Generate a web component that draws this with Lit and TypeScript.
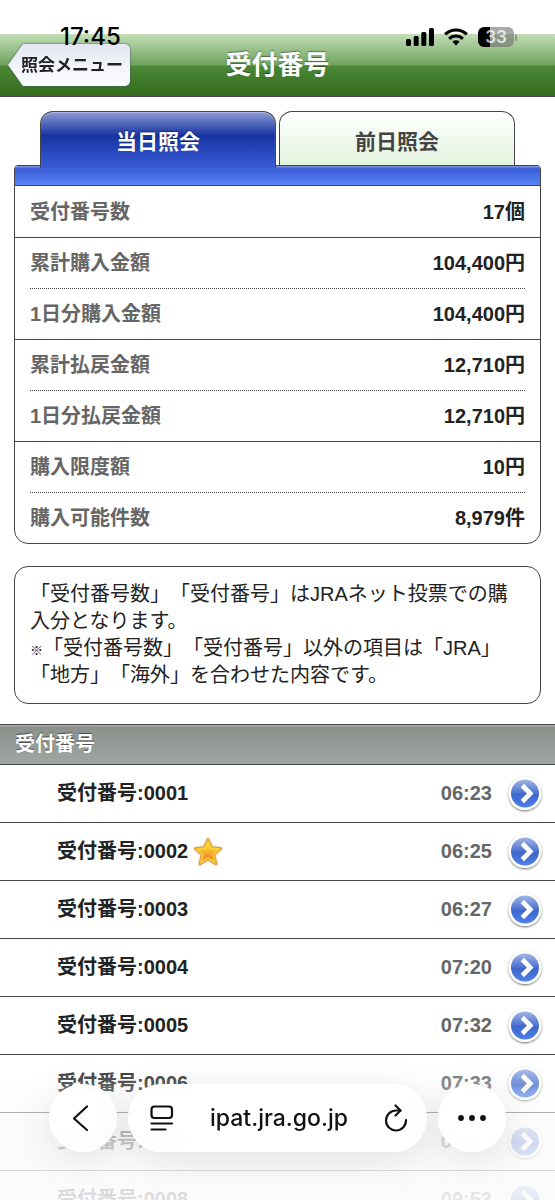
import { LitElement, html, css, svg } from "lit";
import { customElement, property } from "lit/decorators.js";

interface SummaryRow {
  label: string;
  value: string;
}

interface Receipt {
  no: string;
  time: string;
  starred?: boolean;
}

const SUMMARY: SummaryRow[][] = [
  [{ label: "受付番号数", value: "17個" }],
  [
    { label: "累計購入金額", value: "104,400円" },
    { label: "1日分購入金額", value: "104,400円" },
  ],
  [
    { label: "累計払戻金額", value: "12,710円" },
    { label: "1日分払戻金額", value: "12,710円" },
  ],
  [
    { label: "購入限度額", value: "10円" },
    { label: "購入可能件数", value: "8,979件" },
  ],
];

const RECEIPTS: Receipt[] = [
  { no: "0001", time: "06:23" },
  { no: "0002", time: "06:25", starred: true },
  { no: "0003", time: "06:27" },
  { no: "0004", time: "07:20" },
  { no: "0005", time: "07:32" },
  { no: "0006", time: "07:33" },
  { no: "0007", time: "08:57" },
  { no: "0008", time: "09:53" },
];

@customElement("status-bar")
class StatusBar extends LitElement {
  static styles = css`
    :host {
      display: flex;
      align-items: center;
      justify-content: space-between;
      padding: 0 38px 0 60px;
      color: #000;
      font-family: Inter, sans-serif;
    }
    .time {
      font-size: 24px;
      line-height: 24px;
      font-weight: 500;
    }
    .icons {
      display: flex;
      align-items: center;
      gap: 10px;
    }
    .battery {
      display: flex;
      align-items: center;
      gap: 1px;
    }
    .level {
      display: block;
      width: 36px;
      height: 20px;
      border-radius: 6px;
      background: linear-gradient(90deg, #000 33%, rgba(110, 110, 110, 0.6) 33%);
      color: rgba(255, 255, 255, 0.75);
      font-size: 17px;
      line-height: 20px;
      font-weight: 600;
      text-align: center;
    }
    .cap {
      width: 2px;
      height: 7px;
      border-radius: 0 2px 2px 0;
      background: rgba(110, 110, 110, 0.6);
    }
  `;

  render() {
    return html`
      <span class="time">17:45</span>
      <span class="icons">
        <svg width="28" height="18" viewBox="0 0 28 18" aria-label="電波">
          <rect x="0" y="11" width="5" height="7" rx="1.5" />
          <rect x="7.7" y="8" width="5" height="10" rx="1.5" />
          <rect x="15.3" y="4" width="5" height="14" rx="1.5" />
          <rect x="23" y="0" width="5" height="18" rx="1.5" />
        </svg>
        <svg width="24" height="18" viewBox="0 0 24 18" fill="none" stroke="#000" stroke-width="3.2" aria-label="Wi-Fi">
          <path d="M1.2 6.4a15.4 15.4 0 0 1 21.6 0" />
          <path d="M5.2 10.8a9.6 9.6 0 0 1 13.6 0" />
          <path d="M12 17.4l-3.6-3.6a5.1 5.1 0 0 1 7.2 0z" fill="#000" stroke="none" />
        </svg>
        <span class="battery"><span class="level">33</span><span class="cap"></span></span>
      </span>
    `;
  }
}

@customElement("receipt-row")
class ReceiptRow extends LitElement {
  @property({ attribute: false }) receipt!: Receipt;

  static styles = css`
    :host {
      display: block;
    }
    .link {
      display: flex;
      align-items: center;
      box-sizing: border-box;
      min-height: 58px;
      padding: 0 10px 0 57px;
      border-bottom: 1px solid #444;
      color: #222;
      text-decoration: none;
      font-weight: 700;
    }
    .star {
      margin-left: 4px;
    }
    .time {
      margin-left: auto;
      color: #666;
    }
    .go {
      margin-left: 13px;
    }
    svg {
      display: block;
    }
  `;

  private star() {
    const shape = "M16 3.400L19.600 11.600L28.800 12.600L21.900 18.600L24 27.800L16 23L8 27.800L10.100 18.600L3.200 12.600L12.400 11.600Z";
    return svg`
      <svg class="star" width="32" height="32" viewBox="0 0 32 32" stroke-linejoin="round" aria-label="注目">
        <defs>
          <linearGradient id="gold" x1="0" y1="0" x2="0" y2="1">
            <stop offset="0" stop-color="#fde01c" />
            <stop offset="0.4" stop-color="#fdc52c" />
            <stop offset="0.7" stop-color="#f0922c" />
            <stop offset="1" stop-color="#fbb834" />
          </linearGradient>
        </defs>
        <path d=${shape} fill="none" stroke="#f1eadf" stroke-width="5" />
        <path d=${shape} fill="none" stroke="#e2933a" stroke-width="2.600" />
        <path d=${shape} fill="url(#gold)" stroke="#f8b732" stroke-width="0.800" />
        <path d=${shape} fill="none" stroke="#fbdc3c" stroke-width="1.300" transform="translate(2.400 2.600) scale(0.850)" />
      </svg>`;
  }

  render() {
    const { no, time, starred } = this.receipt;
    return html`
      <a class="link" href="#${no}">
        <span>受付番号:${no}</span>
        ${starred ? this.star() : null}
        <span class="time">${time}</span>
        <svg class="go" width="40" height="40" viewBox="0 0 40 40" aria-hidden="true">
          <defs>
            <linearGradient id="ball" x1="0" y1="0" x2="0" y2="1">
              <stop offset="0" stop-color="#a3b6e6" />
              <stop offset="0.5" stop-color="#4a70cf" />
              <stop offset="0.52" stop-color="#3c66cc" />
              <stop offset="1" stop-color="#4f80e8" />
            </linearGradient>
            <filter id="soft" x="-20%" y="-20%" width="140%" height="150%">
              <feDropShadow dx="0" dy="1" stdDeviation="1.300" flood-color="#000" flood-opacity="0.6" />
            </filter>
          </defs>
          <circle cx="20" cy="19.500" r="16.500" fill="#fff" filter="url(#soft)" />
          <circle cx="20" cy="19.500" r="14" fill="url(#ball)" />
          <path d="M17.300 11.500l8 8-8 8" fill="none" stroke="#fff" stroke-width="4.600" />
        </svg>
      </a>
    `;
  }
}

@customElement("browser-bar")
class BrowserBar extends LitElement {
  static styles = css`
    :host {
      display: flex;
      gap: 11px;
      padding: 0 49px;
    }
    .round,
    .address {
      height: 68px;
      border-radius: 34px;
      background: rgba(255, 255, 255, 0.94);
      backdrop-filter: blur(3px);
      box-shadow:
        0 8px 40px rgba(0, 0, 0, 0.1),
        inset 0 0 2px 1px #fff;
    }
    .round {
      flex: none;
      width: 68px;
    }
    .address {
      flex: 1;
      display: flex;
      align-items: center;
      justify-content: space-between;
      padding: 0 19px 0 22px;
    }
    button {
      display: flex;
      align-items: center;
      justify-content: center;
      padding: 0;
      border: 0;
      background: none;
      color: #111;
      font: 500 23px/30px Inter, sans-serif;
    }
  `;

  render() {
    return html`
      <button class="round" aria-label="戻る">
        <svg width="28" height="28" viewBox="0 0 28 28" fill="none" stroke="#111" stroke-width="2.200" stroke-linecap="round" stroke-linejoin="round">
          <path d="M18 2.500L5 14.500 18 26" />
        </svg>
      </button>
      <div class="address">
        <button aria-label="ページメニュー">
          <svg width="24" height="28" viewBox="0 0 24 28" fill="none" stroke="#111" stroke-width="2.200" stroke-linecap="round">
            <rect x="1.500" y="2.500" width="20.500" height="11.500" rx="3" />
            <path d="M1.500 19.500h20.500M1.500 25.500h14" />
          </svg>
        </button>
        <button>ipat.jra.go.jp</button>
        <button aria-label="再読み込み">
          <svg width="24" height="28" viewBox="0 0 24 28" fill="none" stroke="#111" stroke-width="2.200" stroke-linecap="round" stroke-linejoin="round">
            <path d="M16.500 6.500h-4.500a10 10 0 1 0 10 9.500" />
            <path d="M11.500 1.500l5 5-5 5" />
          </svg>
        </button>
      </div>
      <button class="round" aria-label="その他">
        <svg width="28" height="8" viewBox="0 0 28 8" fill="#111">
          <circle cx="3" cy="4" r="2.900" />
          <circle cx="14" cy="4" r="2.900" />
          <circle cx="25" cy="4" r="2.900" />
        </svg>
      </button>
    `;
  }
}

@customElement("app-root")
class AppRoot extends LitElement {
  static styles = css`
    :host {
      display: block;
      position: relative;
      box-sizing: border-box;
      height: 100vh;
      overflow: hidden;
      padding-top: 34px;
      background: #fff;
      color: #222;
      font-family: "Liberation Sans", "Noto Sans CJK JP", sans-serif;
      font-size: 20px;
      line-height: 27px;
      text-spacing-trim: space-all;
    }
    .status {
      position: absolute;
      inset: 25px 0 auto;
    }
    .header {
      display: grid;
      grid-template-columns: 1fr auto 1fr;
      align-items: center;
      box-sizing: border-box;
      height: 63px;
      padding: 0 8px;
      border-bottom: 1px solid #444;
      background: linear-gradient(#c3deb6, #6fa35f 50%, #4b8736 52%, #336d1d);
    }
    .title {
      margin: 0;
      color: #fff;
      font-size: 26px;
      line-height: 36px;
      text-shadow: 0 -1px 1px rgba(0, 0, 0, 0.4);
    }
    .back {
      position: relative;
      justify-self: start;
      height: 42px;
      padding: 0 7px 0 13px;
      border: 0;
      background: none;
      color: #222;
      font: inherit;
      font-size: 17px;
      font-weight: 700;
      filter: drop-shadow(0 0 1px #456);
    }
    .back::before {
      content: "";
      position: absolute;
      inset: 0;
      z-index: -1;
      border-radius: 5px;
      background: linear-gradient(#e2e6f1, #f0f3f9 50%, #fbfcfe);
      clip-path: polygon(0 50%, 15px 0, 100% 0, 100% 100%, 15px 100%);
    }
    .main {
      padding: 14px 14px 0 14px;
    }
    .tabs {
      display: grid;
      grid-template-columns: 1fr 1fr;
      gap: 3px;
      padding: 0 26px;
    }
    .tab {
      height: 54px;
      padding: 6px 0 0;
      border: 1px solid #444;
      border-bottom: 0;
      border-radius: 13px 13px 0 0;
      background: linear-gradient(#fff, #e2f4de);
      color: #444;
      font: inherit;
      font-size: 21px;
      font-weight: 700;
    }
    .tab.current {
      z-index: 1;
      height: 57px;
      margin-bottom: -3px;
      padding-top: 3px;
      background: linear-gradient(#8b9ad6, #1733a0 42%, #2444b8 65%, #385bd5);
      box-shadow: inset 0 1px 1px rgba(255, 255, 255, 0.35);
      color: #fff;
      text-shadow: 0 -1px 1px rgba(0, 0, 0, 0.4);
    }
    .card {
      border: 1px solid #444;
      border-radius: 4px 4px 14px 14px;
    }
    .band {
      height: 19px;
      border-bottom: 1px solid #444;
      border-radius: 3px 3px 0 0;
      background: linear-gradient(#8799e0, #385bd5 15%, #5a85f5);
    }
    .summary {
      margin: 0;
      padding-top: 1px;
      font-weight: 700;
    }
    .group {
      padding: 0 15px;
    }
    .group + .group {
      border-top: 1px solid #444;
    }
    .row {
      display: flex;
      align-items: center;
      justify-content: space-between;
      height: 50px;
    }
    .row + .row {
      border-top: 1px dotted #444;
    }
    .label {
      color: #666;
    }
    .value {
      margin: 0;
    }
    .notice {
      margin: 22px 0 20px;
      padding: 14px 15px;
      border: 1px solid #444;
      border-radius: 14px;
    }
    .notice p {
      margin: 0;
    }
    .mark {
      font-size: 13px;
      line-height: 16px;
    }
    .section {
      box-sizing: border-box;
      height: 41px;
      margin: 0;
      padding: 6px 15px 0;
      border: solid #444;
      border-width: 1px 0;
      background: linear-gradient(#b4b9b6, #8a918d 5%, #a0a6a2);
      color: #fff;
      font-size: 20px;
      line-height: 27px;
      text-shadow: 0 -1px 1px rgba(0, 0, 0, 0.5);
    }
    .list {
      margin: 0;
      padding: 0;
      list-style: none;
    }
    .fade {
      position: absolute;
      inset: auto 0 0;
      height: 142px;
      background: linear-gradient(
        rgba(255, 255, 255, 0),
        rgba(252, 252, 252, 0.25) 18%,
        rgba(250, 250, 250, 0.6) 39%,
        rgba(250, 250, 250, 0.78) 60%,
        rgba(251, 251, 251, 0.86)
      );
    }
    .browser {
      position: absolute;
      inset: auto 0 48px;
    }
  `;

  render() {
    return html`
      <header class="header">
        <button class="back">照会メニュー</button>
        <h1 class="title">受付番号</h1>
      </header>
      <main>
        <div class="main">
          <div class="tabs" role="tablist">
            <button class="tab current" role="tab" aria-selected="true">当日照会</button>
            <button class="tab" role="tab" aria-selected="false">前日照会</button>
          </div>
          <div class="card">
            <div class="band"></div>
            <dl class="summary">
              ${SUMMARY.map(
                (group) => html`<div class="group">
                  ${group.map(
                    (row) => html`<div class="row">
                      <dt class="label">${row.label}</dt>
                      <dd class="value">${row.value}</dd>
                    </div>`,
                  )}
                </div>`,
              )}
            </dl>
          </div>
          <div class="notice">
            <p>「受付番号数」「受付番号」はJRAネット投票での購入分となります。</p>
            <p><span class="mark">※</span>「受付番号数」「受付番号」以外の項目は「JRA」「地方」「海外」を合わせた内容です。</p>
          </div>
        </div>
        <h2 class="section">受付番号</h2>
        <ul class="list">
          ${RECEIPTS.map((r) => html`<li><receipt-row .receipt=${r}></receipt-row></li>`)}
        </ul>
      </main>
      <div class="fade"></div>
      <status-bar class="status"></status-bar>
      <browser-bar class="browser"></browser-bar>
    `;
  }
}
